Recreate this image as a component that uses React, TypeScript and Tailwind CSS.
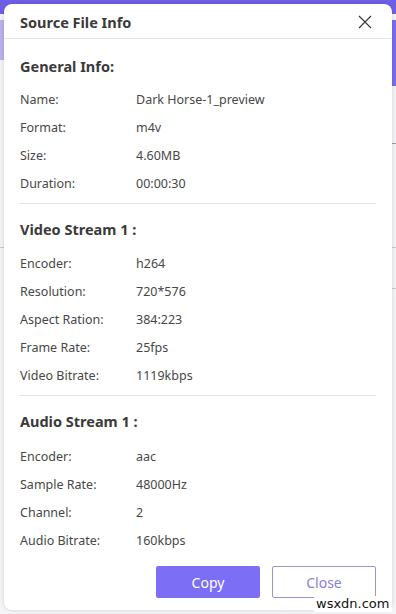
import React from "react";

type Row = [string, string];

const general: Row[] = [
  ["Name:", "Dark Horse-1_preview"],
  ["Format:", "m4v"],
  ["Size:", "4.60MB"],
  ["Duration:", "00:00:30"],
];
const video: Row[] = [
  ["Encoder:", "h264"],
  ["Resolution:", "720*576"],
  ["Aspect Ration:", "384:223"],
  ["Frame Rate:", "25fps"],
  ["Video Bitrate:", "1119kbps"],
];
const audio: Row[] = [
  ["Encoder:", "aac"],
  ["Sample Rate:", "48000Hz"],
  ["Channel:", "2"],
  ["Audio Bitrate:", "160kbps"],
];

function Rows({ rows }: { rows: Row[] }) {
  return (
    <div className="flex flex-col">
      {rows.map(([k, v]) => (
        <div key={k} className="flex h-[28px] items-center pt-[2px] text-[12.5px] text-[#474747]">
          <span className="w-[116px]">{k}</span>
          <span>{v}</span>
        </div>
      ))}
    </div>
  );
}

function Heading({ children }: { children: React.ReactNode }) {
  return (
    <div className="h-[20px] flex items-center pt-[2px] text-[14.5px] font-bold text-[#3a3a3a]">{children}</div>
  );
}

export default function App() {
  return (
    <div
      className="relative w-[396px] h-[614px] overflow-hidden bg-[#f4f4f6]"
      style={{ fontFamily: '"Noto Sans", "Open Sans", sans-serif' }}
    >
      {/* background app */}
      <div className="h-[14px] bg-[#6f5fe8]" />
      <div className="absolute right-0 top-[20px] w-[6px] h-[66px] bg-[#7a6cf0]" />
      <div className="absolute left-0 top-[20px] w-[6px] h-[40px] bg-[#b9b1f0]" />
      <div className="absolute right-0 top-[143px] w-[6px] h-[1px] bg-[#9a9ab0]" />
      <div className="absolute right-0 top-[247px] w-[6px] h-[1px] bg-[#c8c8d0]" />
      <div className="absolute right-0 top-[288px] w-[6px] h-[1px] bg-[#c8c8d0]" />
      <div className="absolute left-0 top-[247px] w-[6px] h-[1px] bg-[#c8c8d0]" />

      {/* dialog */}
      <div className="absolute left-[4px] top-[4px] w-[388px] h-[606px] rounded-[8px] bg-white shadow-[0_0_4px_rgba(0,0,0,0.15)] flex flex-col">
        <div className="h-[35px] shrink-0 border-b border-[#e6e6e6] flex items-center justify-between pt-[3px] pl-[16px] pr-[20px]">
          <span className="text-[14.5px] font-bold text-[#3a3a3a]">Source File Info</span>
          <svg width="14" height="14" viewBox="0 0 14 14" className="text-[#333] -mt-[2px]">
            <path d="M1 1L13 13M13 1L1 13" stroke="currentColor" strokeWidth="1.1" />
          </svg>
        </div>

        <div className="px-[16px] flex flex-col">
          <div className="mt-[17px]">
            <Heading>General Info:</Heading>
          </div>
          <div className="mt-[9px]">
            <Rows rows={general} />
          </div>
          <div className="mt-[6px] h-px bg-[#e3e3e3]" />

          <div className="mt-[15px]">
            <Heading>Video Stream 1 :</Heading>
          </div>
          <div className="mt-[10px]">
            <Rows rows={video} />
          </div>
          <div className="mt-[6px] h-px bg-[#e3e3e3]" />

          <div className="mt-[15px]">
            <Heading>Audio Stream 1 :</Heading>
          </div>
          <div className="mt-[11px]">
            <Rows rows={audio} />
          </div>

          <div className="mt-[12px] flex justify-end gap-[12px]">
            <button className="w-[104px] h-[32px] rounded-[2px] bg-[#7c6ff6] text-white text-[14px]">
              Copy
            </button>
            <button className="w-[104px] h-[32px] rounded-[2px] border border-[#9b94c6] bg-white text-[#8a7fd6] text-[14px]">
              Close
            </button>
          </div>
        </div>
      </div>

      {/* watermark */}
      <div
        className="absolute left-[314px] top-[596px] text-[13px] text-[#111] bg-white px-[2px] leading-[16px]"
        style={{ fontFamily: '"DejaVu Sans", sans-serif' }}
      >
        wsxdn.com
      </div>
    </div>
  );
}
